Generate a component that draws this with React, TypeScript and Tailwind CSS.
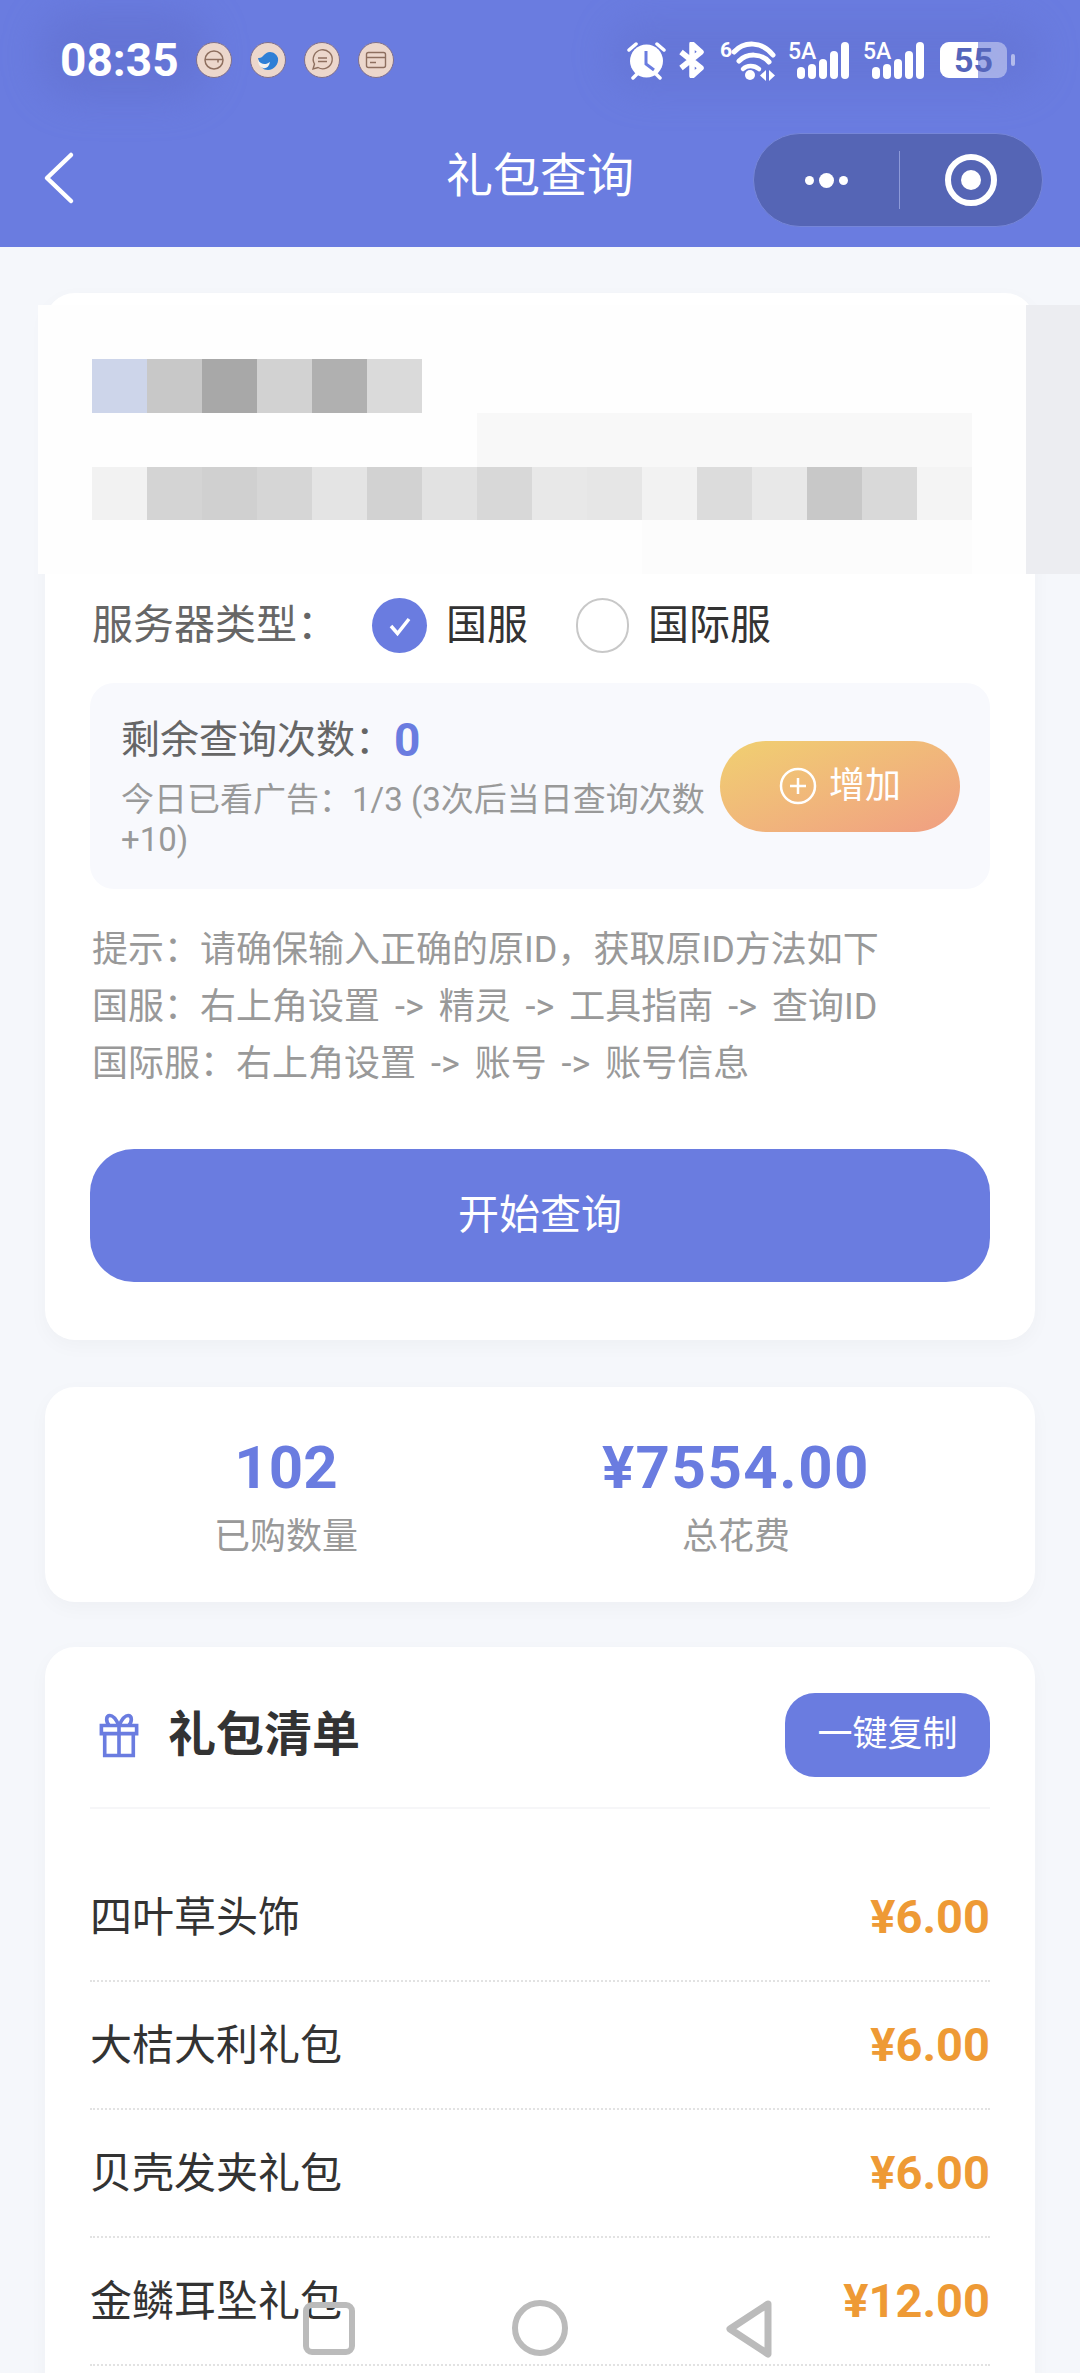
import { useState } from 'react';

const row1 = ['#cdd5ea', '#c8c8c8', '#a8a8a8', '#d2d2d2', '#b0b0b0', '#dadada'];
const row2 = ['#f2f2f2', '#d4d4d4', '#d0d0d0', '#d6d6d6', '#e4e4e4', '#d2d2d2', '#e2e2e2', '#d8d8d8', '#e8e8e8', '#e6e6e6', '#f2f2f2', '#dcdcdc', '#e8e8e8', '#c8c8c8', '#d9d9d9', '#f4f4f4'];

const gifts = [
  { name: '四叶草头饰', price: '¥6.00' },
  { name: '大桔大利礼包', price: '¥6.00' },
  { name: '贝壳发夹礼包', price: '¥6.00' },
  { name: '金鳞耳坠礼包', price: '¥12.00' },
];

function Notif({ children }: { children: React.ReactNode }) {
  return (
    <div className="w-[36px] h-[36px] rounded-full bg-[#ecd7cc] border-[1.5px] border-[#7f6f8a] flex items-center justify-center">
      {children}
    </div>
  );
}

function Signal() {
  return (
    <svg width="62" height="38" viewBox="0 0 62 38" fill="#fff" className="overflow-visible">
      <text x="0" y="18" fontSize="23" fontWeight="500" fontFamily="Roboto, sans-serif">5A</text>
      <rect x="9" y="26" width="8" height="12" rx="4" />
      <rect x="20" y="23" width="8" height="15" rx="4" />
      <rect x="31" y="18" width="8" height="20" rx="4" />
      <rect x="42" y="10" width="8" height="28" rx="4" />
      <rect x="53" y="1" width="8" height="37" rx="4" />
    </svg>
  );
}

function StatusBar() {
  return (
    <div className="relative h-[120px] pl-[60px] pr-[65px] flex items-center justify-between">
      <div className="flex items-center">
        <span className="w-[136px] text-[46px] font-bold text-white leading-none">08:35</span>
        <div className="flex gap-[18px]">
          <Notif>
            <svg width="24" height="24" viewBox="0 0 24 24" fill="none" stroke="#8e6f5f" strokeWidth="1.5">
              <circle cx="12" cy="12" r="9" />
              <path d="M3 11.5h18M16 11.5v3" />
            </svg>
          </Notif>
          <Notif>
            <svg width="30" height="30" viewBox="0 0 30 30">
              <path d="M5 13c5 1 6-6 12-6 4 0 7 3 8 6 1 6-4 12-10 12-5 0-8-3-10-12z" fill="#2f7fd6" />
              <path d="M5 15c3 5 8 5 12 2-1 5-4 7-7 6-3-1-5-4-5-8z" fill="#f4f1ee" />
            </svg>
          </Notif>
          <Notif>
            <svg width="26" height="26" viewBox="0 0 26 26" fill="none" stroke="#8e6f5f" strokeWidth="1.4">
              <path d="M4 22l1.500-5A9.500 9.500 0 1 1 9 20.500z" />
              <path d="M9 11h9M9 14.500h9" />
            </svg>
          </Notif>
          <Notif>
            <svg width="24" height="24" viewBox="0 0 24 24" fill="none" stroke="#8e6f5f" strokeWidth="1.4">
              <rect x="2.500" y="4.500" width="19" height="15" rx="2" />
              <path d="M2.500 9.500h19M6 14.500h6" />
            </svg>
          </Notif>
        </div>
      </div>
      <div className="flex items-center">
        <svg width="40" height="40" viewBox="0 0 40 40" fill="#fff" className="mr-[12px]">
          <circle cx="19.500" cy="21" r="16.500" />
          <path d="M19 11v13l8 6" fill="none" stroke="#6a7ce0" strokeWidth="3" />
          <path d="M2 10l7-6M37 10l-7-6M6 38l4-4M33 38l-4-4" stroke="#fff" strokeWidth="3.500" strokeLinecap="round" />
        </svg>
        <svg width="26" height="36" viewBox="0 0 26 36" fill="none" stroke="#fff" strokeWidth="5.500" strokeLinejoin="round" className="mr-[15px]">
          <path d="M2 10l20 16-9 8V2l9 8L2 26" />
        </svg>
        <svg width="56" height="40" viewBox="0 0 56 40" className="mr-[12px] overflow-visible">
          <text x="0" y="17" fontSize="21" fontWeight="700" fill="#fff" fontFamily="Roboto, sans-serif">6</text>
          <path d="M14 12C24 1 42 1 53 15" fill="none" stroke="#fff" strokeWidth="5" strokeLinecap="round" />
          <path d="M19 21c8-8 22-8 30 1" fill="none" stroke="#fff" strokeWidth="5" strokeLinecap="round" />
          <path d="M23 29c4-4 11-4 16 0" fill="none" stroke="#fff" strokeWidth="4.500" strokeLinecap="round" />
          <circle cx="30" cy="35" r="5" fill="#fff" />
          <path d="M40 35.500l6-5.500v11zM55 35.500l-6-5.500v11z" fill="#fff" />
        </svg>
        <Signal />
        <div className="w-[13px]" />
        <Signal />
        <div className="w-[15px]" />
        <div className="relative w-[67px] h-[36px] rounded-[9px] bg-white/40 flex items-center justify-center">
          <div className="absolute left-0 top-0 bottom-0 w-[38px] rounded-l-[9px] bg-white" />
          <span className="relative text-[34px] font-bold text-[#5565bb] leading-[36px]">55</span>
        </div>
        <div className="ml-[4px] w-[4px] h-[12px] rounded-full bg-white/50" />
      </div>
    </div>
  );
}

function NavBar() {
  return (
    <div className="relative h-[127px] flex items-start justify-center">
      <svg width="34" height="54" viewBox="0 0 34 54" fill="none" stroke="#fff" strokeWidth="4.500" strokeLinecap="round" strokeLinejoin="round" className="absolute left-[42px] top-[31px]">
        <path d="M29 4L5 27l24 23" />
      </svg>
      <span className="text-[47px] text-white leading-[112px]">礼包查询</span>
      <div className="absolute left-[753px] top-[13px] w-[290px] h-[94px] rounded-full bg-[#5565b5] border border-[#7686d8] flex items-center">
        <div className="w-[145px] flex items-center justify-center gap-[5px]">
          <span className="w-[9px] h-[9px] rounded-full bg-white" />
          <span className="w-[15px] h-[15px] rounded-full bg-white" />
          <span className="w-[9px] h-[9px] rounded-full bg-white" />
        </div>
        <div className="w-px h-[58px] bg-[#8d9ad8]" />
        <div className="flex-1 flex items-center justify-center">
          <div className="w-[52px] h-[52px] rounded-full border-[6px] border-white flex items-center justify-center">
            <span className="w-[20px] h-[20px] rounded-full bg-white" />
          </div>
        </div>
      </div>
    </div>
  );
}

// mosaic that hides the ID input in the screenshot
function Mosaic() {
  return (
    <div className="absolute left-[38px] top-[305px] right-0 h-[269px] flex">
      <div className="w-[988px] bg-[#fefefe] pt-[54px] pl-[54px]">
        <div className="flex h-[54px]">
          {row1.map((c, i) => (
            <div key={i} className="w-[55px]" style={{ backgroundColor: c }} />
          ))}
        </div>
        <div className="h-[54px] ml-[385px] w-[495px] bg-[#f8f8f8]" />
        <div className="flex h-[53px]">
          {row2.map((c, i) => (
            <div key={i} className="w-[55px]" style={{ backgroundColor: c }} />
          ))}
        </div>
        <div className="h-[54px] ml-[550px] w-[330px] bg-[#fcfcfc]" />
      </div>
      <div className="flex-1 bg-[#ecedf1]" />
    </div>
  );
}

function Radio({ checked, label }: { checked: boolean; label: string }) {
  return (
    <div className="flex items-center gap-[19px]">
      {checked ? (
        <div className="w-[55px] h-[55px] rounded-full bg-[#6a7ce0] flex items-center justify-center">
          <svg width="28" height="28" viewBox="0 0 28 28" fill="none" stroke="#fff" strokeWidth="3.500">
            <path d="M5 14l6.500 7.500L23 7" />
          </svg>
        </div>
      ) : (
        <div className="w-[53px] h-[55px] rounded-full border-2 border-[#c8c8c8] bg-white" />
      )}
      <span className="text-[41px] text-[#333] leading-[55px]">{label}</span>
    </div>
  );
}

function QueryCard() {
  const [server] = useState('cn');
  return (
    <div className="rounded-[30px] bg-white px-[45px] pt-[305px] pb-[58px] shadow-[0_6px_20px_rgba(0,0,0,0.03)]">
      <div className="flex items-center pl-[2px]">
        <span className="w-[280px] text-[41px] text-[#666] leading-[55px]">{'服务器类型\uFF1A'}</span>
        <div className="flex gap-[48px]">
          <Radio checked={server === 'cn'} label="国服" />
          <Radio checked={server === 'intl'} label="国际服" />
        </div>
      </div>

      <div className="mt-[30px] h-[206px] rounded-[24px] bg-[#f8f9fd] pl-[31px] pr-[30px] flex items-center">
        <div className="flex-1 min-w-0">
          <div className="flex items-center h-[56px]">
            <span className="text-[39px] text-[#666]">{'剩余查询次数\uFF1A'}</span>
            <span className="text-[46px] font-bold text-[#6a7ce0]">0</span>
          </div>
          <p className="mt-[12px] text-[33px] leading-[40px] text-[#999]">{'今日已看广告\uFF1A1/3 (3次后当日查询次数+10)'}</p>
        </div>
        <div className="w-[240px] h-[91px] shrink-0 rounded-full bg-gradient-to-br from-[#f0d070] to-[#f09e82] flex items-center justify-center gap-[12px]">
          <svg width="38" height="38" viewBox="0 0 38 38" fill="none" stroke="#fff" strokeWidth="2.500">
            <circle cx="19" cy="19" r="17" />
            <path d="M19 11v16M11 19h16" />
          </svg>
          <span className="text-[36px] text-white">增加</span>
        </div>
      </div>

      <div className="mt-[33px] pl-[2px] text-[36px] leading-[57px] text-[#999] [word-spacing:6px]">
        <p>{'提示\uFF1A请确保输入正确的原ID\uFF0C获取原ID方法如下'}</p>
        <p>{'国服\uFF1A右上角设置 -> 精灵 -> 工具指南 -> 查询ID'}</p>
        <p>{'国际服\uFF1A右上角设置 -> 账号 -> 账号信息'}</p>
      </div>

      <div className="mt-[56px] h-[133px] rounded-[44px] bg-[#6a7ce0] flex items-center justify-center text-[41px] text-white">开始查询</div>
    </div>
  );
}

function StatsCard() {
  return (
    <div className="mt-[47px] h-[215px] rounded-[30px] bg-white pl-[47px] pr-[43px] pt-[5px] flex items-center justify-around shadow-[0_6px_20px_rgba(0,0,0,0.03)]">
      <div className="flex flex-col items-center">
        <span className="text-[60px] font-bold leading-[70px] text-[#6a7ce0]">102</span>
        <span className="mt-[9px] text-[36px] leading-[50px] text-[#999]">已购数量</span>
      </div>
      <div className="flex flex-col items-center">
        <span className="text-[60px] font-bold leading-[70px] tracking-[1.500px] text-[#6a7ce0]">¥7554.00</span>
        <span className="mt-[9px] text-[36px] leading-[50px] text-[#999]">总花费</span>
      </div>
    </div>
  );
}

function GiftList() {
  return (
    <div className="mt-[45px] rounded-[30px] bg-white px-[45px] pt-[46px] pb-[60px] shadow-[0_6px_20px_rgba(0,0,0,0.03)]">
      <div className="flex items-center justify-between pb-[30px] border-b-2 border-[#f6f6f8]">
        <div className="flex items-center">
          <svg width="40" height="45" viewBox="0 0 42 46" fill="none" stroke="#6a7ce0" strokeWidth="3.800" className="ml-[9px]">
            <path d="M6 21v23h30V21M2.500 12.500h37v8.500h-37zM21 12.500V44M21 12.500C18 6 15 2 11.500 2 7 2 7 9 11 12.500M21 12.500C24 6 27 2 30.500 2 35 2 35 9 31 12.500" />
          </svg>
          <span className="ml-[29px] text-[48px] font-bold text-[#333]">礼包清单</span>
        </div>
        <div className="w-[205px] h-[84px] rounded-[30px] bg-[#6a7ce0] flex items-center justify-center text-[35px] text-white">一键复制</div>
      </div>
      <div className="mt-[45px]">
        {gifts.map((g) => (
          <div key={g.name} className="h-[128px] flex items-center justify-between border-b-2 border-dotted border-[#e2e2e2]">
            <span className="text-[42px] text-[#333]">{g.name}</span>
            <span className="text-[47px] font-bold text-[#ee9a35]">{g.price}</span>
          </div>
        ))}
      </div>
    </div>
  );
}

export default function App() {
  return (
    <div className="relative w-[1080px] h-[2373px] overflow-hidden bg-[#f5f7fb] font-['Roboto','Noto_Sans_CJK_SC',sans-serif]">
      <div className="relative h-[247px] bg-[#6a7ce0] overflow-hidden">
        {/* darker smudges behind the status bar texts */}
        <div className="absolute left-[40px] top-[10px] w-[170px] h-[90px] rounded-[40px] bg-[#5f6ecb]/50 blur-[18px]" />
        <div className="absolute left-[610px] top-[20px] w-[430px] h-[70px] rounded-[40px] bg-[#5f6ecb]/40 blur-[18px]" />
        <StatusBar />
        <NavBar />
      </div>
      <div className="px-[45px] pt-[46px]">
        <QueryCard />
        <StatsCard />
        <GiftList />
      </div>
      <Mosaic />
      {/* android nav buttons, floating over the page */}
      <div className="absolute left-[303px] top-[2302px] w-[52px] h-[53px] rounded-[9px] border-[6px] border-[#bbb]" />
      <div className="absolute left-[512px] top-[2300px] w-[56px] h-[56px] rounded-full border-[6px] border-[#bbb]" />
      <svg width="48" height="60" viewBox="0 0 48 60" fill="none" stroke="#bbb" strokeWidth="7" strokeLinejoin="round" className="absolute left-[725px] top-[2299px]">
        <path d="M43 5L5 30l38 25z" />
      </svg>
    </div>
  );
}
